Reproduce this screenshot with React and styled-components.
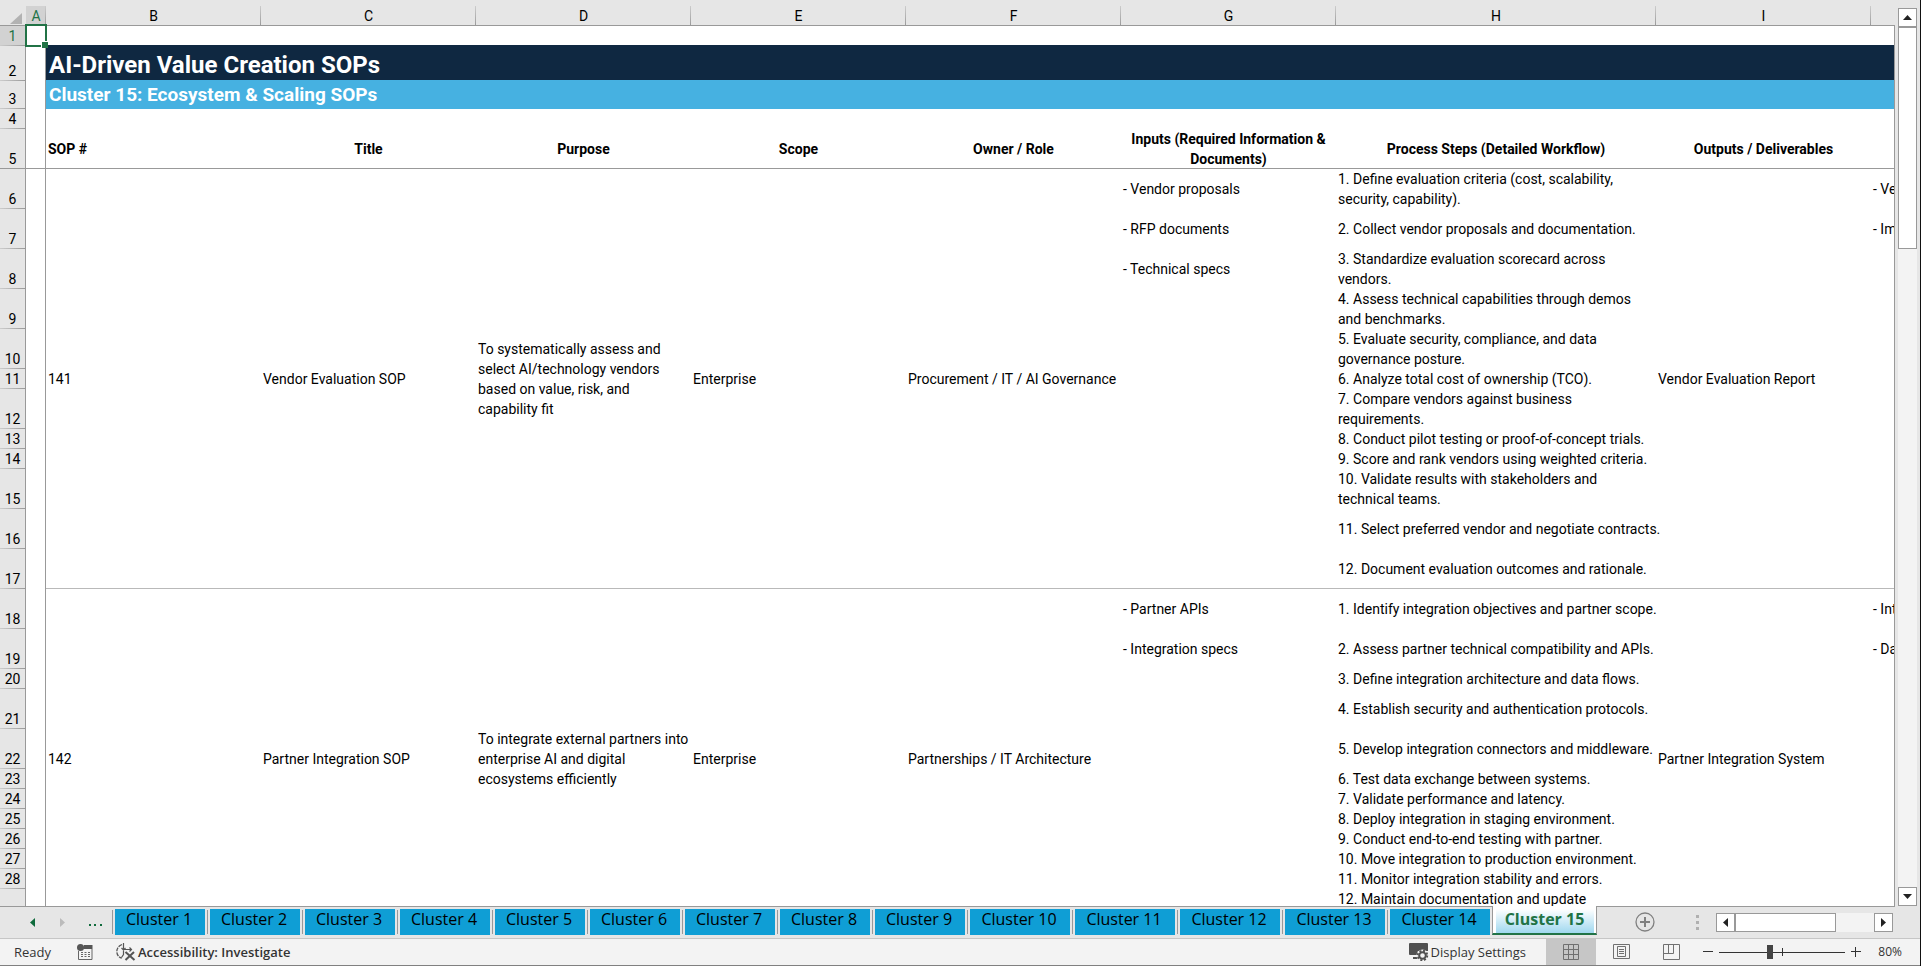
import React, { useState } from "react";
import styled, { createGlobalStyle, css } from "styled-components";

const GlobalStyle = createGlobalStyle`
    * {
        box-sizing: border-box;
    }

    body {
        margin: 0;
        overflow: hidden;
        background: #e6e6e6;
    }

    button, input {
        margin: 0;
        padding: 0;
        border: 0;
        font: inherit;
        color: inherit;
        background: none;
    }
`;

const columns = [
    { id: "A", width: 20 },
    { id: "B", width: 215 },
    { id: "C", width: 215 },
    { id: "D", width: 215 },
    { id: "E", width: 215 },
    { id: "F", width: 215 },
    { id: "G", width: 215 },
    { id: "H", width: 320 },
    { id: "I", width: 215 },
    { id: "J", width: 215 },
];

const headings = [
    "Title",
    "Purpose",
    "Scope",
    "Owner / Role",
    "Inputs (Required Information &\nDocuments)",
    "Process Steps (Detailed Workflow)",
    "Outputs / Deliverables",
    "",
];

// size is the number of text lines the row is tall
const sops = [
    {
        id: 141,
        title: "Vendor Evaluation SOP",
        purpose: "To systematically assess and\nselect AI/technology vendors\nbased on value, risk, and\ncapability fit",
        scope: "Enterprise",
        owner: "Procurement / IT / AI Governance",
        output: "Vendor Evaluation Report",
        firstRow: 6,
        rows: [
            { size: 2, input: "- Vendor proposals", step: "1. Define evaluation criteria (cost, scalability,\nsecurity, capability).", next: "- Ve" },
            { size: 2, input: "- RFP documents", step: "2. Collect vendor proposals and documentation.", next: "- Im" },
            { size: 2, input: "- Technical specs", step: "3. Standardize evaluation scorecard across\nvendors." },
            { size: 2, step: "4. Assess technical capabilities through demos\nand benchmarks." },
            { size: 2, step: "5. Evaluate security, compliance, and data\ngovernance posture." },
            { size: 1, step: "6. Analyze total cost of ownership (TCO)." },
            { size: 2, step: "7. Compare vendors against business\nrequirements." },
            { size: 1, step: "8. Conduct pilot testing or proof-of-concept trials." },
            { size: 1, step: "9. Score and rank vendors using weighted criteria." },
            { size: 2, step: "10. Validate results with stakeholders and\ntechnical teams." },
            { size: 2, step: "11. Select preferred vendor and negotiate contracts." },
            { size: 2, step: "12. Document evaluation outcomes and rationale." },
        ],
    },
    {
        id: 142,
        title: "Partner Integration SOP",
        purpose: "To integrate external partners into\nenterprise AI and digital\necosystems efficiently",
        scope: "Enterprise",
        owner: "Partnerships / IT Architecture",
        output: "Partner Integration System",
        firstRow: 18,
        rows: [
            { size: 2, input: "- Partner APIs", step: "1. Identify integration objectives and partner scope.", next: "- Int" },
            { size: 2, input: "- Integration specs", step: "2. Assess partner technical compatibility and APIs.", next: "- Da" },
            { size: 1, step: "3. Define integration architecture and data flows." },
            { size: 2, step: "4. Establish security and authentication protocols." },
            { size: 2, step: "5. Develop integration connectors and middleware." },
            { size: 1, step: "6. Test data exchange between systems." },
            { size: 1, step: "7. Validate performance and latency." },
            { size: 1, step: "8. Deploy integration in staging environment." },
            { size: 1, step: "9. Conduct end-to-end testing with partner." },
            { size: 1, step: "10. Move integration to production environment." },
            { size: 1, step: "11. Monitor integration stability and errors." },
            { size: 2, step: "12. Maintain documentation and update\n " },
        ],
    },
];

const sheets = Array.from({ length: 15 }, (_, i) => `Cluster ${i + 1}`);

const Window = styled.div`
    display: flex;
    flex-direction: column;
    height: 100vh;
    border-right: 1px solid #111;
    background: #e6e6e6;
    color: #000;
    font-family: Roboto, "Liberation Sans", sans-serif;
    font-size: 14px;
`;

const Workspace = styled.main`
    display: flex;
    flex: 1;
    min-height: 0;
`;

const Viewport = styled.div`
    flex: 1;
    min-width: 0;
    overflow: hidden;
`;

// zero width lets the fixed layout take its width from the columns
const Sheet = styled.table`
    width: 0;
    table-layout: fixed;
    border-collapse: separate;
    border-spacing: 0;
    background: #fff;
    line-height: 20px;
`;

const Col = styled.col`
    width: ${(p) => p.$width}px;
`;

const Row = styled.tr`
    height: ${(p) => p.$height}px;
`;

const Corner = styled.th`
    padding: 0;
    background: #e6e6e6;
    box-shadow: inset 0 -1px #999;

    svg {
        display: block;
        margin: 11px 0 0 10px;
    }
`;

const ColumnHead = styled.th`
    height: 26px;
    padding: 6px 0 0;
    font-weight: 400;
    line-height: 19px;
    color: ${(p) => (p.$active ? "#217346" : "#000")};
    background:
        linear-gradient(#999, #999) 0 100% / 100% 1px no-repeat,
        linear-gradient(#ccc, #999) 100% 6px / 1px 20px no-repeat,
        linear-gradient(#d2d2d2, #d2d2d2) 0 6px / ${(p) => (p.$active ? "100%" : "0")} 20px no-repeat,
        #e6e6e6;
`;

const RowHead = styled.th`
    padding: 0 1px 1px 0;
    vertical-align: bottom;
    font-weight: 400;
    line-height: 18px;
    color: ${(p) => (p.$active ? "#217346" : "#000")};
    background:
        linear-gradient(#999, #999) 100% 0 / 1px 100% no-repeat,
        linear-gradient(90deg, ${(p) => (p.$frozen ? "#999" : "#ccc")}, #999) 0 100% / 100% 1px no-repeat,
        ${(p) => (p.$active ? "#d2d2d2" : "#e6e6e6")};
`;

const Cell = styled.td`
    padding: 0 2px;
    white-space: pre;
    vertical-align: middle;
    ${(p) => p.$ruled && css`
        box-shadow: inset 0 -1px #b9b9b9;
    `}
`;

const MarginCell = styled.td`
    position: relative;
    padding: 0;
    box-shadow: inset -1px 0 #999${(p) => (p.$frozen ? ", inset 0 -1px #999" : "")};
`;

const Selection = styled.div`
    position: absolute;
    z-index: 1;
    inset: -2px -1px -1px -1px;
    border: 2px solid #217346;

    &::after {
        content: "";
        position: absolute;
        right: -3px;
        bottom: -3px;
        width: 6px;
        height: 6px;
        border: solid #fff;
        border-width: 1px 0 0 1px;
        background: #217346;
    }
`;

const Banner = styled.td`
    padding: ${(p) => (p.$level === 1 ? "3px 3px 0" : "0 3px")};
    color: #fff;
    background: ${(p) => (p.$level === 1 ? "#0f2841" : "#46b1e1")};
    box-shadow: 0 -1px ${(p) => (p.$level === 1 ? "#0f2841" : "#46b1e1")};
    font-size: ${(p) => (p.$level === 1 ? "24px" : "19px")};
    font-weight: 700;
    line-height: 28px;
`;

const Heading = styled.th`
    padding: 0 2px;
    white-space: pre;
    text-align: ${(p) => p.$align || "center"};
    font-weight: 700;
    box-shadow: inset 0 -1px #999;
`;

const Edge = styled.div`
    width: 1px;
    margin-top: 25px;
    background: #999;
`;

const VerticalScroll = styled.div`
    display: flex;
    flex-direction: column;
    width: 19px;
    margin: 8px 3px 0;
    background: #f3f3f3;
`;

const HorizontalScroll = styled.div`
    display: flex;
    width: 177px;
    height: 19px;
    margin-right: 27px;
    background: #f3f3f3;
`;

const ScrollButton = styled.button`
    display: grid;
    place-items: center;
    width: 19px;
    height: 19px;
    border: 1px solid #999;
    background: #fff;
`;

const Thumb = styled.div`
    ${(p) => (p.$vertical ? "height: 222px" : "width: 101px")};
    margin-${(p) => (p.$vertical ? "bottom" : "right")}: auto;
    border: 1px solid #999;
    background: #fff;
`;

const TabBar = styled.nav`
    display: flex;
    align-items: center;
    height: 33px;
    border-bottom: 1px solid #c6c6c6;
    background: linear-gradient(#999, #999) 0 0 / calc(100% - 25px) 1px no-repeat #e6e6e6;
    font-family: "Open Sans", "Noto Sans", sans-serif;
`;

const TabArrows = styled.div`
    display: flex;
    align-items: center;
    justify-content: space-between;
    width: 112px;
    padding: 0 9px 0 30px;
`;

const ArrowButton = styled.button`
    display: flex;
`;

const TabItem = styled.div`
    display: flex;
    align-items: center;
    gap: 2px;
    padding-right: 2px;

    &::before {
        content: "";
        width: 1px;
        height: 24px;
        background: #999;
    }
`;

const Tab = styled.button`
    width: ${(p) => (p.$wide ? 100 : 90)}px;
    height: 26px;
    padding: 0 2px 6px 0;
    background: #0f9ed5;
    font-size: 16px;
    line-height: 20px;
`;

const ActiveTab = styled.button`
    align-self: flex-start;
    width: 105px;
    height: 29px;
    border: solid #999;
    border-width: 0 1px;
    border-bottom: 2px solid #217346;
    background: linear-gradient(#fff, #a0d8ef) 50% 100% / 98px 24px no-repeat #fff;
    color: #217346;
    font-size: 16px;
    font-weight: 700;
    line-height: 25px;
`;

const AddSheet = styled.button`
    display: flex;
    margin: 0 auto 0 38px;
`;

const Grip = styled.span`
    display: grid;
    gap: 3px;
    margin-right: 17px;

    i {
        width: 3px;
        height: 3px;
        background: #b0b0b0;
    }
`;

const StatusBar = styled.footer`
    display: flex;
    align-items: center;
    height: 27px;
    padding: 0 18px 0 14px;
    border-bottom: 1px solid #808080;
    background: #f3f3f3;
    color: #333;
    font-family: "Open Sans", "Noto Sans", sans-serif;
    font-size: 13px;
    line-height: 18px;
`;

const StatusButton = styled.button`
    display: flex;
    align-items: center;
    gap: 2px;
    margin-left: ${(p) => p.$gap || 0}px;
    font-weight: ${(p) => (p.$strong ? 600 : 400)};
`;

const StatusRight = styled.div`
    display: flex;
    align-items: center;
    height: 100%;
    margin-left: auto;
`;

const Views = styled.div`
    display: flex;
    height: 100%;
    margin-left: 20px;
`;

const ViewButton = styled.button`
    display: grid;
    place-items: center;
    width: 50px;
    background: ${(p) => (p.$active ? "#c6c6c6" : "none")};
`;

const ZoomControl = styled.div`
    display: flex;
    align-items: center;
    gap: 6px;
    margin-left: 7px;

    button {
        display: flex;
    }
`;

const ZoomRange = styled.input`
    appearance: none;
    width: 126px;
    height: 14px;
    background:
        linear-gradient(#333, #333) 0 50% / 100% 1px no-repeat,
        linear-gradient(#333, #333) 50% 50% / 1px 8px no-repeat;

    &::-webkit-slider-thumb {
        appearance: none;
        width: 6px;
        height: 14px;
        background: #444;
    }
`;

const ZoomValue = styled.output`
    width: 41px;
    text-align: right;
    font-size: 12px;
`;

const arrowPaths = {
    up: "M4.5 0L9 5H0z",
    down: "M0 0h9L4.5 5z",
    left: "M5 0v9L0 4.5z",
    right: "M0 0l5 4.5L0 9z",
};

const Arrow = ({ to, fill = "#222" }) => {
    const upright = to === "left" || to === "right";
    return (
        <svg width={upright ? 5 : 9} height={upright ? 9 : 5} fill={fill}>
            <path d={arrowPaths[to]} />
        </svg>
    );
};

const MacroIcon = () => (
    <svg width="16" height="16" viewBox="0 0 16 16">
        <path d="M7 1h8.500v4H6z" fill="#555" />
        <path d="M1.500 7v8.500h13.500V5" fill="none" stroke="#666" />
        <circle cx="3.500" cy="3.500" r="3.500" fill="#555" />
        <path d="M4 8.500h9M4 10.500h9M4 12.500h9" stroke="#666" strokeDasharray="2 1.500" />
    </svg>
);

const AccessibilityIcon = () => (
    <svg width="20" height="18" viewBox="0 0 20 18" fill="none" stroke="#555">
        <path d="M6 1.500C2.500 3 .8 5.500.8 8.500s1.700 5.500 5 6.700" strokeWidth="1.300" strokeDasharray="4 1" />
        <path d="M7.500 0v6.500M5.500 5l2 2 2-2M8.500 6.500h7M13.500 4.500l2 2-2 2" strokeWidth="1.200" />
        <path d="M7.500 7.500v4l-2 3" strokeWidth="1.200" />
        <path d="M9.500 9l9 8M18 9l-8.500 8" strokeWidth="2" />
    </svg>
);

const DisplayIcon = () => (
    <svg width="20" height="18" viewBox="0 0 20 18">
        <path d="M1 0h17a1 1 0 0 1 1 1v7H9v4H1a1 1 0 0 1-1-1V1a1 1 0 0 1 1-1zM4 14h5v2H4z" fill="#505050" />
        <circle cx="13.500" cy="12.500" r="6" fill="#f3f3f3" />
        <circle cx="13.500" cy="12.500" r="3.300" fill="none" stroke="#505050" strokeWidth="2" />
        <circle cx="13.500" cy="12.500" r="4.800" fill="none" stroke="#505050" strokeWidth="1.800" strokeDasharray="2 1.770" />
    </svg>
);

const NormalIcon = () => (
    <svg width="16" height="16" fill="none" stroke="#707070">
        <path d="M.5.5h15v15H.5zM5.500.5v15M10.500.5v15M.5 5.500h15M.5 10.500h15" />
    </svg>
);

const PageLayoutIcon = () => (
    <svg width="17" height="16" fill="none" stroke="#707070">
        <path d="M.5.5h16v14H.5zM4.500 2.500h8v10h-8zM6 5.500h5M6 7.500h5M6 9.500h5" />
    </svg>
);

const PageBreakIcon = () => (
    <svg width="17" height="16" fill="none" stroke="#707070">
        <path d="M.5.5h16v15H.5zM.5 9.500h10v-9M5.500.5v9" />
    </svg>
);

const SopRows = ({ sop }) =>
    sop.rows.map((row, index) => {
        const span = sop.rows.length;
        const last = index === span - 1;
        return (
            <Row key={index} $height={row.size * 20}>
                <RowHead scope="row">{sop.firstRow + index}</RowHead>
                <MarginCell />
                {index === 0 && (
                    <>
                        <Cell rowSpan={span} $ruled>{sop.id}</Cell>
                        <Cell rowSpan={span} $ruled>{sop.title}</Cell>
                        <Cell rowSpan={span} $ruled>{sop.purpose}</Cell>
                        <Cell rowSpan={span} $ruled>{sop.scope}</Cell>
                        <Cell rowSpan={span} $ruled>{sop.owner}</Cell>
                    </>
                )}
                <Cell $ruled={last}>{row.input}</Cell>
                <Cell $ruled={last}>{row.step}</Cell>
                {index === 0 && <Cell rowSpan={span} $ruled>{sop.output}</Cell>}
                <Cell $ruled={last}>{row.next}</Cell>
            </Row>
        );
    });

const App = () => {
    const [active, setActive] = useState("Cluster 15");
    const [zoom, setZoom] = useState(80);

    return (
        <Window>
            <GlobalStyle />
            <Workspace>
                <Viewport>
                    <Sheet>
                        <colgroup>
                            <Col $width={26} />
                            {columns.map((col) => (
                                <Col key={col.id} $width={col.width} />
                            ))}
                        </colgroup>
                        <thead>
                            <Row $height={26}>
                                <Corner aria-label="Select all">
                                    <svg width="12" height="12">
                                        <path d="M12 0v11H0z" fill="#b2b2b2" />
                                    </svg>
                                </Corner>
                                {columns.map((col) => (
                                    <ColumnHead key={col.id} scope="col" $active={col.id === "A"}>
                                        {col.id}
                                    </ColumnHead>
                                ))}
                            </Row>
                        </thead>
                        <tbody>
                            <Row $height={20}>
                                <RowHead scope="row" $active>1</RowHead>
                                <MarginCell><Selection /></MarginCell>
                                <Cell colSpan={9} />
                            </Row>
                            <Row $height={35}>
                                <RowHead scope="row">2</RowHead>
                                <MarginCell />
                                <Banner colSpan={9} $level={1}>AI-Driven Value Creation SOPs</Banner>
                            </Row>
                            <Row $height={28}>
                                <RowHead scope="row">3</RowHead>
                                <MarginCell />
                                <Banner colSpan={9} $level={2}>Cluster 15: Ecosystem &amp; Scaling SOPs</Banner>
                            </Row>
                            <Row $height={20}>
                                <RowHead scope="row">4</RowHead>
                                <MarginCell />
                                <Cell colSpan={9} />
                            </Row>
                            <Row $height={40}>
                                <RowHead scope="row" $frozen>5</RowHead>
                                <MarginCell $frozen />
                                <Heading scope="col" $align="left">SOP #</Heading>
                                {headings.map((text) => (
                                    <Heading key={text} scope="col">{text}</Heading>
                                ))}
                            </Row>
                            {sops.map((sop) => (
                                <SopRows key={sop.id} sop={sop} />
                            ))}
                        </tbody>
                    </Sheet>
                </Viewport>
                <Edge />
                <VerticalScroll>
                    <ScrollButton aria-label="Scroll up"><Arrow to="up" /></ScrollButton>
                    <Thumb $vertical />
                    <ScrollButton aria-label="Scroll down"><Arrow to="down" /></ScrollButton>
                </VerticalScroll>
            </Workspace>

            <TabBar aria-label="Sheets">
                <TabArrows>
                    <ArrowButton aria-label="Previous sheet"><Arrow to="left" fill="#0f6b3c" /></ArrowButton>
                    <ArrowButton aria-label="Next sheet"><Arrow to="right" fill="#bbb" /></ArrowButton>
                    <ArrowButton aria-label="More sheets">
                        <svg width="14" height="10" fill="#0f6b3c">
                            <path d="M0 7h2v2H0zM5 7h2v2H5zM11 7h2v2h-2z" />
                        </svg>
                    </ArrowButton>
                </TabArrows>
                {sheets.map((name, index) =>
                    name === active ? (
                        <ActiveTab key={name}>{name}</ActiveTab>
                    ) : (
                        <TabItem key={name}>
                            <Tab $wide={index > 8} onClick={() => setActive(name)}>{name}</Tab>
                        </TabItem>
                    )
                )}
                <AddSheet aria-label="New sheet">
                    <svg width="20" height="20" fill="none" stroke="#808080">
                        <circle cx="10" cy="10" r="9" strokeWidth="1.300" />
                        <path d="M10 5v10M5 10h10" strokeWidth="2" />
                    </svg>
                </AddSheet>
                <Grip><i /><i /><i /></Grip>
                <HorizontalScroll>
                    <ScrollButton aria-label="Scroll left"><Arrow to="left" /></ScrollButton>
                    <Thumb />
                    <ScrollButton aria-label="Scroll right"><Arrow to="right" /></ScrollButton>
                </HorizontalScroll>
            </TabBar>

            <StatusBar>
                <span>Ready</span>
                <StatusButton $gap={26} aria-label="Record macro"><MacroIcon /></StatusButton>
                <StatusButton $gap={23} $strong>
                    <AccessibilityIcon />
                    Accessibility: Investigate
                </StatusButton>
                <StatusRight>
                    <StatusButton>
                        <DisplayIcon />
                        Display Settings
                    </StatusButton>
                    <Views>
                        <ViewButton $active aria-label="Normal"><NormalIcon /></ViewButton>
                        <ViewButton aria-label="Page layout"><PageLayoutIcon /></ViewButton>
                        <ViewButton aria-label="Page break preview"><PageBreakIcon /></ViewButton>
                    </Views>
                    <ZoomControl>
                        <button aria-label="Zoom out">
                            <svg width="10" height="10" stroke="#333"><path d="M0 4.500h10" /></svg>
                        </button>
                        <ZoomRange
                            type="range"
                            aria-label="Zoom"
                            min="0"
                            max="200"
                            value={zoom}
                            onChange={(e) => setZoom(Number(e.target.value))}
                        />
                        <button aria-label="Zoom in">
                            <svg width="10" height="10" stroke="#333"><path d="M0 4.500h10M4.500 0v10" /></svg>
                        </button>
                    </ZoomControl>
                    <ZoomValue>{zoom}%</ZoomValue>
                </StatusRight>
            </StatusBar>
        </Window>
    );
};

export default App;
